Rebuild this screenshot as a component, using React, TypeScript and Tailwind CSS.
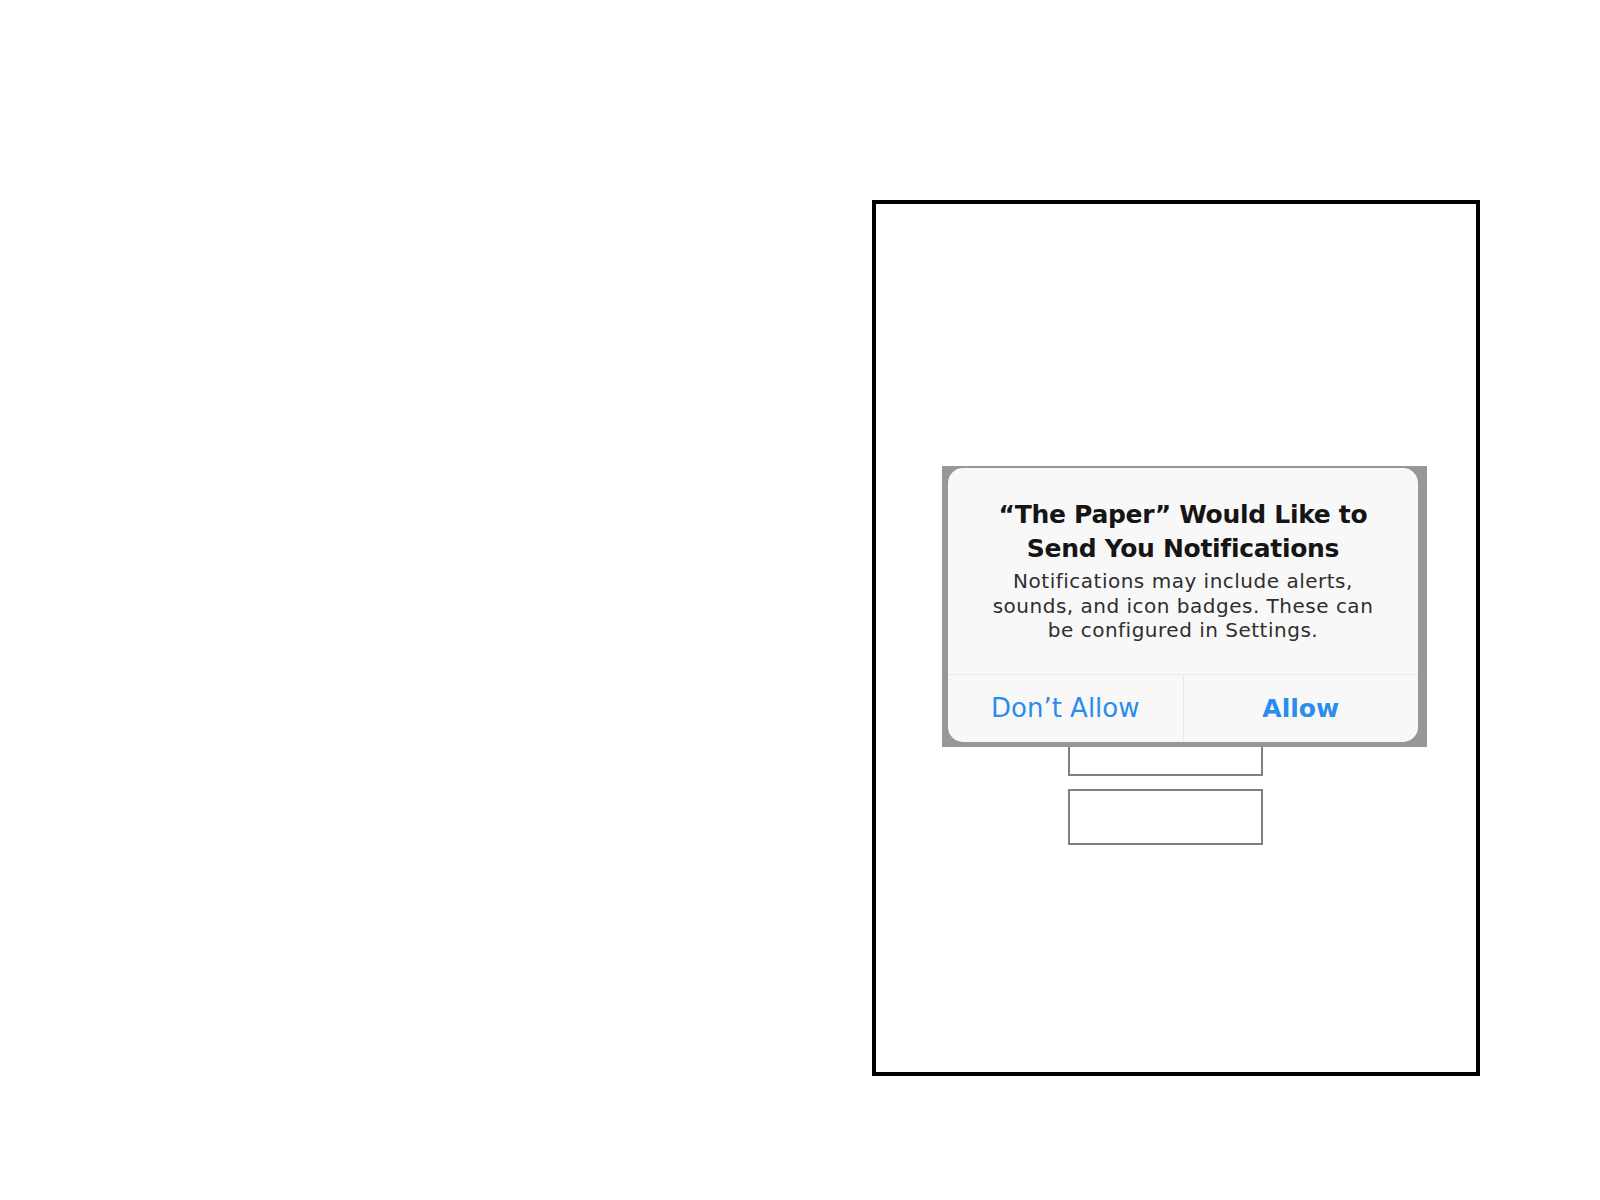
export default function App() {
  return (
    <div className="w-[1600px] h-[1200px] bg-white pt-[200px] pl-[872px] font-['DejaVu_Sans',sans-serif]">
      {/* phone frame */}
      <div className="relative w-[608px] h-[876px] border-4 border-black bg-white">
        <div className="flex flex-col gap-[13px] pl-[192px] pt-[516px]">
          <div className="w-[195px] h-[56px] border-2 border-[#808080]" />
          <div className="w-[195px] h-[56px] border-2 border-[#808080]" />
        </div>

        {/* permission alert */}
        <div className="absolute left-[66px] top-[262px] w-[485px] h-[281px] bg-[#979797] pl-[6px] pr-[9px] pt-[2px] pb-[5px]">
          <div className="h-full rounded-[15px] bg-[#f8f8f8] flex flex-col">
            <div className="flex-1 flex flex-col items-center pt-[30px] text-center">
              <div className="text-[25px] leading-[34px] font-bold text-[#151515] tracking-[-0.3px] whitespace-nowrap">
                <div>“The Paper” Would Like to</div>
                <div>Send You Notifications</div>
              </div>
              <div className="mt-[3px] text-[20px] leading-[24.5px] text-[#2e2e2e] tracking-[0.5px] whitespace-nowrap">
                <div>Notifications may include alerts,</div>
                <div>sounds, and icon badges. These can</div>
                <div>be configured in Settings.</div>
              </div>
            </div>
            <div className="h-[68px] flex border-t border-[#e8e8e8]">
              <button className="flex-1 border-r border-[#e8e8e8] text-[26px] text-[#2a8ceb]">
                Don’t Allow
              </button>
              <button className="flex-1 text-[25px] font-bold text-[#2a8ceb]">
                Allow
              </button>
            </div>
          </div>
        </div>
      </div>
    </div>
  );
}
